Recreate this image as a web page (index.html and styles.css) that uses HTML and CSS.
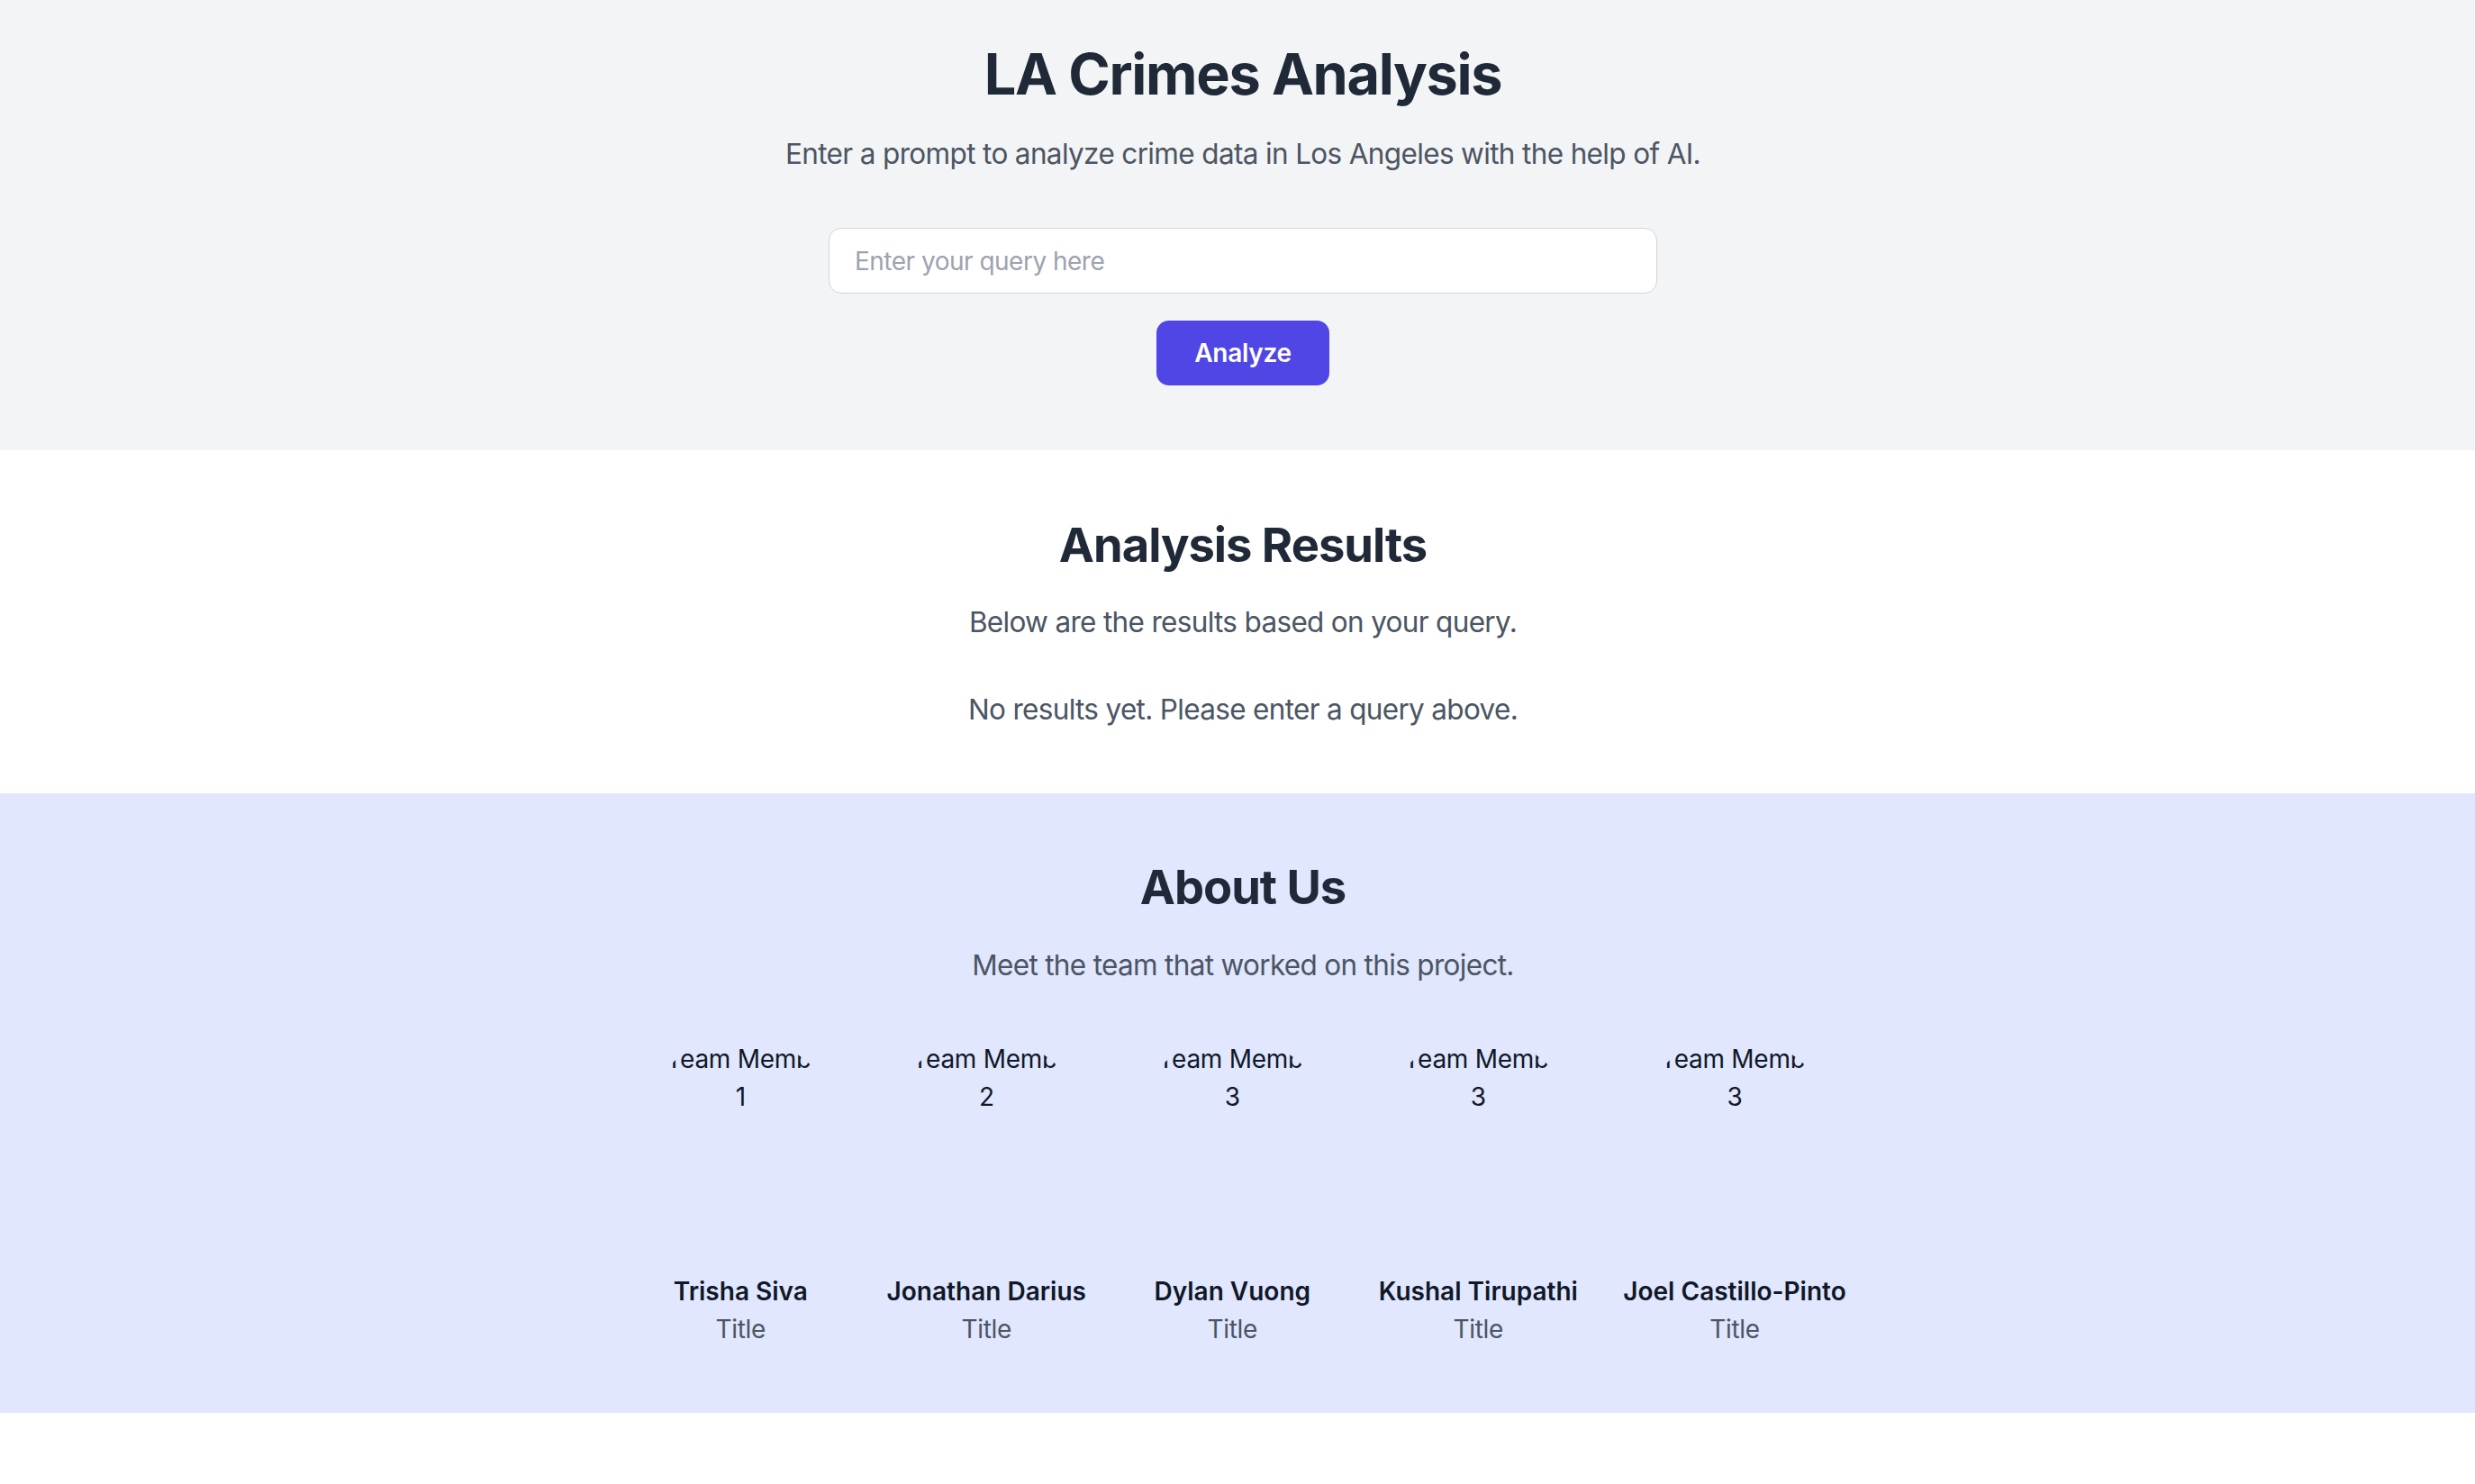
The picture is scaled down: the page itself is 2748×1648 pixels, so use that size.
FILE: index.html
```html
<!DOCTYPE html>
<html lang="en">
<head>
<meta charset="utf-8">
<title>LA Crimes Analysis</title>
<link rel="stylesheet" href="styles.css">
</head>
<body>
<header class="hero">
  <div class="wrap">
    <h1 class="hero-title">LA Crimes Analysis</h1>
    <p class="hero-sub">Enter a prompt to analyze crime data in Los Angeles with the help of AI.</p>
    <form class="query-form">
      <input class="query-input" type="text" placeholder="Enter your query here">
      <button class="analyze-btn" type="button">Analyze</button>
    </form>
  </div>
</header>
<section class="results">
  <div class="wrap">
    <h2 class="section-title">Analysis Results</h2>
    <p class="section-sub">Below are the results based on your query.</p>
    <p class="results-empty">No results yet. Please enter a query above.</p>
  </div>
</section>
<section class="about">
  <div class="wrap">
    <h2 class="section-title">About Us</h2>
    <p class="section-sub">Meet the team that worked on this project.</p>
    <div class="team">
      <div class="member">
        <div class="avatar">Team Member 1</div>
        <div class="member-name">Trisha Siva</div>
        <div class="member-title">Title</div>
      </div>
      <div class="member">
        <div class="avatar">Team Member 2</div>
        <div class="member-name">Jonathan Darius</div>
        <div class="member-title">Title</div>
      </div>
      <div class="member">
        <div class="avatar">Team Member 3</div>
        <div class="member-name">Dylan Vuong</div>
        <div class="member-title">Title</div>
      </div>
      <div class="member">
        <div class="avatar">Team Member 3</div>
        <div class="member-name">Kushal Tirupathi</div>
        <div class="member-title">Title</div>
      </div>
      <div class="member">
        <div class="avatar">Team Member 3</div>
        <div class="member-name">Joel Castillo-Pinto</div>
        <div class="member-title">Title</div>
      </div>
    </div>
  </div>
</section>
</body>
</html>
```

FILE: styles.css
```css
* { box-sizing: border-box; }

html, body {
  margin: 0;
  padding: 0;
}

body {
  font-family: Inter, "Noto Sans", "Liberation Sans", sans-serif;
  letter-spacing: -0.018em;
  background: #ffffff;
  color: #1f2937;
}

.wrap {
  display: flex;
  flex-direction: column;
  align-items: center;
  text-align: center;
  padding-left: 12px;
}

/* ---------- hero ---------- */
.hero {
  background: #f3f4f6;
  padding: 47px 0 71.4px;
}

.hero-title {
  margin: 0;
  font-size: 63px;
  line-height: 70px;
  font-weight: 700;
  letter-spacing: -0.0215em;
  color: #1f2937;
}

.hero-sub {
  margin: 28.6px 0 0;
  font-size: 31.5px;
  line-height: 49px;
  letter-spacing: -0.0205em;
  color: #4b5563;
}

.query-form {
  display: flex;
  flex-direction: column;
  align-items: center;
  margin-top: 58.6px;
}

.query-input {
  width: 920px;
  height: 73px;
  padding: 0 28px;
  border: 1px solid #d1d5db;
  border-radius: 14px;
  background: #ffffff;
  font-family: Inter, "Noto Sans", sans-serif;
  font-size: 28px;
  letter-spacing: -0.018em;
  color: #111827;
  outline: none;
}

.query-input::placeholder {
  color: #9ca3af;
}

.analyze-btn {
  margin-top: 30px;
  height: 72px;
  padding: 0 42px;
  border: 0;
  border-radius: 14px;
  background: #4f46e5;
  color: #ffffff;
  font-family: Inter, "Noto Sans", sans-serif;
  font-size: 28px;
  line-height: 42px;
  font-weight: 600;
  letter-spacing: -0.01em;
  cursor: pointer;
}

/* ---------- sections ---------- */
.section-title {
  margin: 0;
  font-size: 52.5px;
  line-height: 63px;
  font-weight: 700;
  letter-spacing: -0.0195em;
  color: #1f2937;
}

.section-sub {
  margin: 29.5px 0 0;
  font-size: 31.5px;
  line-height: 49px;
  letter-spacing: -0.0215em;
  color: #4b5563;
}

.results {
  background: #ffffff;
  padding: 74.4px 0 68.7px;
}

.results-empty {
  margin: 47.6px 0 0;
  font-size: 31.5px;
  line-height: 49px;
  letter-spacing: -0.0215em;
  color: #4b5563;
}

.about {
  background: #e0e7ff;
  padding: 73.4px 0 72.1px;
}

.team {
  display: flex;
  justify-content: center;
  gap: 49px;
  margin-top: 55.8px;
}

.member {
  display: flex;
  flex-direction: column;
  align-items: center;
}

.avatar {
  width: 224px;
  height: 224px;
  border-radius: 50%;
  overflow: hidden;
  padding: 3.5px;
  font-size: 28px;
  line-height: 42px;
  color: #111827;
  text-align: center;
}

.avatar::before {
  content: "";
  float: left;
  width: 22px;
  height: 28px;
}

.member-name {
  margin-top: 37.8px;
  font-size: 28px;
  line-height: 42px;
  font-weight: 600;
  letter-spacing: 0;
  color: #111827;
  white-space: nowrap;
}

.member-title {
  font-size: 28px;
  line-height: 42px;
  color: #4b5563;
}
```
